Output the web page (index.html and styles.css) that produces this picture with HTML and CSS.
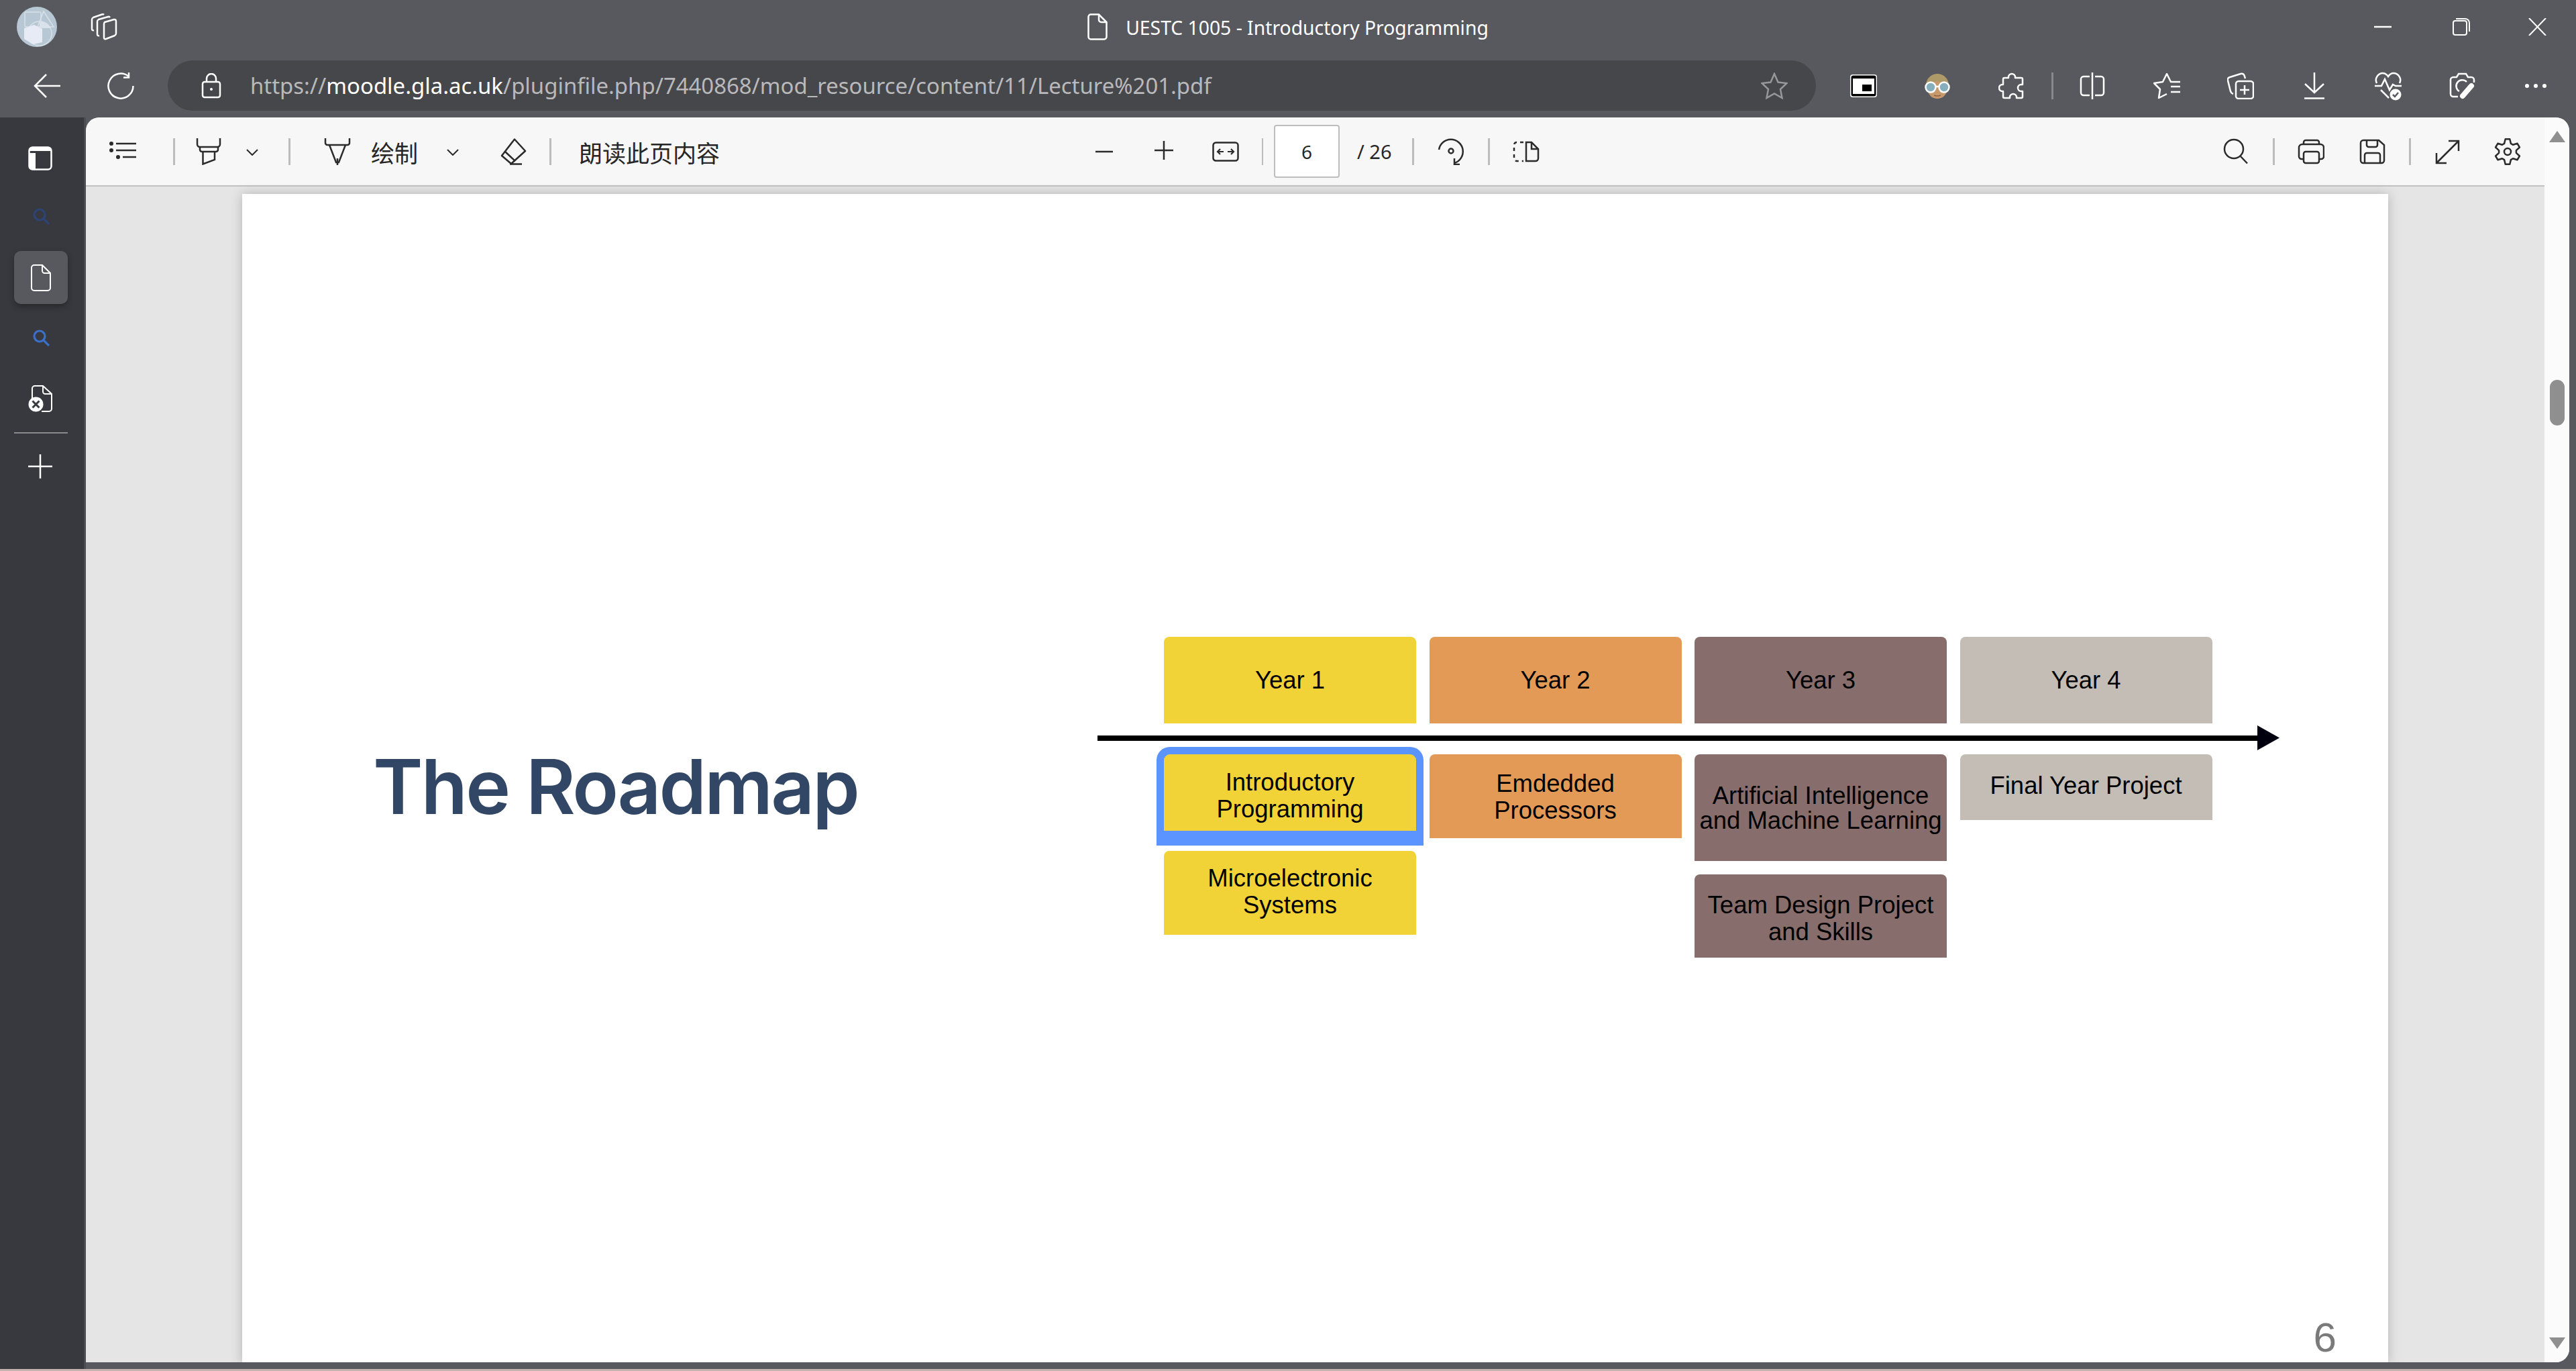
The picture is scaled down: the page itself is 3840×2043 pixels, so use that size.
FILE: index.html
```html
<!doctype html>
<html>
<head>
    <meta charset='utf-8'>
    <title>UESTC 1005 - Introductory Programming</title>
    <link rel="stylesheet" href="styles.css">
</head>
<body>
    <div class="titleBar">
        <div class="titleLeft">
            <svg class="avatar" width="60" height="60" viewBox="0 0 60 60">
                <circle cx="30" cy="30" r="30" fill="#b7c8d4"/>
                <g fill="none" stroke="#d7e0e8" stroke-width="1.5">
                    <rect x="12" y="8" width="24" height="22" rx="2"/>
                    <path d="M40 7L55 30H31z"/>
                    <circle cx="34" cy="40" r="18"/>
                </g>
                <path d="M11 32L26 27L38 33V53L24 56L11 48z" fill="#e6ebf5"/>
                <path d="M34 22a18 18 0 0 1 17 10H34z" fill="#d9e1ea"/>
            </svg>
            <svg class="workspaces ml-50" width="40" height="40" viewBox="0 0 40 40" fill="none" stroke="#fff" stroke-width="2.5">
                <path d="M21 13L35 9Q38 8.500 38 12V30Q38 32 36 33L23 38Q20 39 20 36V16Q20 14 21 13z"/>
                <path d="M13 33Q10 34 10 31V12Q10 10 12 9L26 5Q28 4.500 29 6"/>
                <path d="M5 25Q2 26 2 23V9Q2 7 4 6L17 1.500Q19 1 20 2"/>
            </svg>
        </div>
        <div class="titleCenter">
            <svg width="30" height="40" viewBox="0 0 30 40" fill="none" stroke="#fff" stroke-width="2.5">
                <path d="M5 1.500H17L28.500 13V35a3.500 3.500 0 0 1-3.500 3.500H5A3.500 3.500 0 0 1 1.500 35V5A3.500 3.500 0 0 1 5 1.500z"/>
                <path d="M17 1.500V9.500a3.500 3.500 0 0 0 3.500 3.500H28.500"/>
            </svg>
            <span class="pageTitle">UESTC 1005 - Introductory Programming</span>
        </div>
        <div class="windowButtons">
            <svg width="26" height="26" viewBox="0 0 26 26" stroke="#fff" stroke-width="2.500"><path d="M0 13H26"/></svg>
            <svg class="ml-91" width="26" height="26" viewBox="0 0 26 26" fill="none" stroke="#fff" stroke-width="2">
                <rect x="1" y="4" width="20" height="21" rx="3"/>
                <path d="M5 1H19a6 6 0 0 1 6 6V20"/>
            </svg>
            <svg class="ml-87" width="27" height="26" viewBox="0 0 27 26" stroke="#fff" stroke-width="2"><path d="M1 0L26 26M26 0L1 26"/></svg>
        </div>
    </div>

    <div class="addressRow">
        <svg width="40" height="40" viewBox="0 0 40 40" fill="none" stroke="#fff" stroke-width="2.500"><path d="M3 20H40M19 3L2 20L19 37"/></svg>
        <svg class="ml-70" width="40" height="40" viewBox="0 0 40 40" fill="none" stroke="#fff" stroke-width="2.500">
            <path d="M32 6A18.500 18.500 0 1 0 38.500 20"/>
            <path d="M32 0V7.500H24"/>
        </svg>
        <div class="addressBar">
            <svg class="lock" width="30" height="38" viewBox="0 0 30 38" fill="none" stroke="#fff" stroke-width="2.500">
                <rect x="2" y="13" width="26" height="23" rx="3"/>
                <path d="M8 13V8a7 7 0 0 1 14 0V13"/>
                <circle cx="15" cy="24" r="2" fill="#fff" stroke="none"/>
            </svg>
            <span class="url">https://<b>moodle.gla.ac.uk</b>/pluginfile.php/7440868/mod_resource/content/11/Lecture%201.pdf</span>
            <svg class="star" width="40" height="40" viewBox="0 0 40 40" fill="none" stroke="#98989b" stroke-width="2.500">
                <path d="M20 2L25.500 14.500L38.500 16L29 25L31.500 38L20 31.500L8.500 38L11 25L1.500 16L14.500 14.500z"/>
            </svg>
        </div>
        <div class="browserTools">
            <svg width="40" height="34" viewBox="0 0 40 34">
                <rect width="40" height="34" rx="4" fill="#fff"/>
                <rect x="1.500" y="1.500" width="37" height="31" rx="3" fill="#000"/>
                <rect x="4" y="6" width="32" height="23" fill="#fff"/>
                <rect x="18" y="15" width="14" height="10" fill="#000"/>
            </svg>
            <svg class="ml-70" width="40" height="40" viewBox="0 0 40 40">
                <circle cx="20" cy="19" r="17" fill="#ad9a68"/>
                <ellipse cx="20" cy="26" rx="14" ry="13" fill="#c6996c"/>
                <path d="M15 34Q20 36 25 34" stroke="#8f5f3c" stroke-width="1.500" fill="none"/>
                <g fill="#86aebd" stroke="#fff" stroke-width="2.500">
                    <circle cx="10" cy="22" r="7.500"/>
                    <circle cx="30" cy="22" r="7.500"/>
                    <path d="M17 21H23"/>
                </g>
            </svg>
            <svg class="ml-71" width="40" height="40" viewBox="0 0 40 40" fill="none" stroke="#fff" stroke-width="2.500" stroke-linejoin="round">
                <path d="M15 7a5 5 0 0 1 10 0V8h9a2 2 0 0 1 2 2v8h-2a5 5 0 0 0 0 10h2v8a2 2 0 0 1-2 2h-7v-1a5 5 0 0 0-10 0v1H9a2 2 0 0 1-2-2v-8H6a5 5 0 0 1 0-10h1v-8a2 2 0 0 1 2-2h6z"/>
            </svg>
            <span class="chromeSep ml-39"></span>
            <svg class="ml-38" width="40" height="40" viewBox="0 0 40 40" fill="none" stroke="#fff" stroke-width="2.500">
                <path d="M16 6H7a4 4 0 0 0-4 4V30a4 4 0 0 0 4 4H16M24 6H33a4 4 0 0 1 4 4V30a4 4 0 0 1-4 4H24M20 0V40"/>
            </svg>
            <svg class="ml-71" width="40" height="40" viewBox="0 0 40 40" fill="none" stroke="#fff" stroke-width="2.500" stroke-linejoin="round">
                <path d="M40 14H26L20 2L14 14L1 16L10 25L8 38L20 32"/>
                <path d="M26 21H40M26 29H40"/>
            </svg>
            <svg class="ml-70" width="40" height="40" viewBox="0 0 40 40" fill="none" stroke="#fff" stroke-width="2.500">
                <rect x="13" y="13" width="26" height="26" rx="4"/>
                <path d="M26 19V33M19 26H33"/>
                <path d="M9 32Q6 31 5 28L1 12Q0 8 4 7L20 2Q25 1 26 6L27 9"/>
            </svg>
            <svg class="ml-70" width="40" height="40" viewBox="0 0 40 40" fill="none" stroke="#fff" stroke-width="2.500">
                <path d="M20 0V30M6 17L20 30L34 17M5 38.500H35"/>
            </svg>
            <svg class="ml-70" width="40" height="44" viewBox="0 0 40 44" fill="none" stroke="#fff" stroke-width="2.500">
                <path d="M3 18C-1 10 6 3 12 3c4 0 6 2 8 5 2-3 4-5 8-5 6 0 13 7 9 15"/>
                <path d="M0 22H10L15 12L22 28L27 20L31 22H40"/>
                <path d="M9 28L21 40"/>
                <circle cx="31" cy="35" r="8.500" fill="#fff" stroke="none"/>
                <path d="M27 35L30 38L35 32" stroke="#58595e"/>
            </svg>
            <svg class="ml-70" width="40" height="40" viewBox="0 0 40 40" fill="none" stroke="#fff" stroke-width="2.500">
                <path d="M14 36H7a4 4 0 0 1-4-4V11a4 4 0 0 1 4-4H12L15 2H26L29 7H34a4 4 0 0 1 4 4V15"/>
                <path d="M27 14A9 9 0 1 0 16 28"/>
                <path d="M34 20L21 35" stroke-width="8" stroke-linecap="round"/>
            </svg>
            <svg class="ml-70" width="40" height="10" viewBox="0 0 40 10" fill="#fff">
                <circle cx="7" cy="5" r="3"/><circle cx="20" cy="5" r="3"/><circle cx="33" cy="5" r="3"/>
            </svg>
        </div>
    </div>

    <div class="mainRow">
        <div class="sidebar">
            <svg class="sideTabs" width="36" height="36" viewBox="0 0 36 36">
                <rect x="1.500" y="1.500" width="33" height="33" rx="5" fill="none" stroke="#fff" stroke-width="2.500"/>
                <path d="M6 1.500H30a4.500 4.500 0 0 1 4.500 4.500V7H1.500V6A4.500 4.500 0 0 1 6 1.500zM1.500 10H11V34.500H6a4.500 4.500 0 0 1-4.500-4.500z" fill="#fff"/>
            </svg>
            <svg class="sideSearch" width="25" height="26" viewBox="0 0 25 26" fill="none" stroke="#2c4475" stroke-width="3.200">
                <circle cx="10" cy="10" r="8"/><path d="M16 16L24 24"/>
            </svg>
            <div class="sideActive">
                <svg width="30" height="40" viewBox="0 0 30 40" fill="none" stroke="#fff" stroke-width="2">
                    <path d="M5 1H17L29 13V35a4 4 0 0 1-4 4H5a4 4 0 0 1-4-4V5a4 4 0 0 1 4-4z"/>
                    <path d="M17 1V9.500a3.500 3.500 0 0 0 3.500 3.500H29"/>
                </svg>
            </div>
            <svg class="sideSearch2" width="25" height="26" viewBox="0 0 25 26" fill="none" stroke="#3b70c9" stroke-width="3.200">
                <circle cx="10" cy="10" r="8"/><path d="M16 16L24 24"/>
            </svg>
            <svg class="sideClosed" width="36" height="40" viewBox="0 0 36 40" fill="none" stroke="#fff" stroke-width="2">
                <path d="M6 20V5a4 4 0 0 1 4-4H22L35 13V35a4 4 0 0 1-4 4H20"/>
                <path d="M22 1V9.500a3.500 3.500 0 0 0 3.500 3.500H35"/>
                <circle cx="11.500" cy="28.500" r="11" fill="#fff" stroke="none"/>
                <path d="M6.500 23.500L16.500 33.500M16.500 23.500L6.500 33.500" stroke="#38393e" stroke-width="3"/>
            </svg>
            <div class="sideRule"></div>
            <svg class="sidePlus" width="36" height="36" viewBox="0 0 36 36" stroke="#fff" stroke-width="2.500"><path d="M18 0V36M0 18H36"/></svg>
        </div>

        <div class="panel">
            <div class="viewerColumn">
                <div class="pdfToolbar">
                    <div class="toolGroup leftTools">
                        <svg class="tool" viewBox="0 0 40 40" fill="none" stroke="#2b2b2b" stroke-width="2.500">
                            <path d="M10 8H40M10 18H40M20 28H40"/>
                            <g fill="#2b2b2b" stroke="none"><circle cx="3" cy="8" r="3"/><circle cx="3" cy="18" r="3"/><circle cx="13" cy="28" r="3"/></g>
                        </svg>
                        <span class="sep ml-55"></span>
                        <svg class="tool ml-30" viewBox="0 0 40 40" fill="none" stroke="#2b2b2b" stroke-width="2.500">
                            <path d="M3 0V9a4 4 0 0 0 4 4H33a4 4 0 0 0 4-4V0"/>
                            <path d="M7 13V17a3 3 0 0 0 3 3H31a3 3 0 0 0 3-3V13"/>
                            <path d="M11.500 20V38.500L29 32V20"/>
                        </svg>
                        <svg class="chevron ml-36" width="18" height="10" viewBox="0 0 18 10" fill="none" stroke="#2b2b2b" stroke-width="2"><path d="M1 1L9 9L17 1"/></svg>
                        <span class="sep ml-45"></span>
                        <svg class="tool ml-50" viewBox="0 0 40 40" fill="none" stroke="#2b2b2b" stroke-width="2.500">
                            <path d="M2 0V7a3 3 0 0 0 3 3H35a3 3 0 0 0 3-3V0"/>
                            <path d="M8 10L18 36H22L32 10"/>
                            <path d="M20 30V40"/>
                        </svg>
                        <span class="toolText ml-30">绘制</span>
                        <svg class="chevron ml-43" width="18" height="10" viewBox="0 0 18 10" fill="none" stroke="#2b2b2b" stroke-width="2"><path d="M1 1L9 9L17 1"/></svg>
                        <svg class="tool ml-61" viewBox="0 0 40 40" fill="none" stroke="#2b2b2b" stroke-width="2.500" stroke-linejoin="round">
                            <path d="M22 1.500L38 19L17 38L3 26z"/>
                            <path d="M8 20L23 34M15 38.500H33"/>
                        </svg>
                        <span class="sep ml-34"></span>
                        <span class="toolText ml-41">朗读此页内容</span>
                    </div>
                    <div class="toolGroup">
                        <svg class="tool" viewBox="0 0 40 40" stroke="#2b2b2b" stroke-width="2.500"><path d="M7 20H33"/></svg>
                        <svg class="tool ml-49" viewBox="0 0 40 40" stroke="#2b2b2b" stroke-width="2.500"><path d="M6 18H34M20 4V32"/></svg>
                        <svg class="ml-52" width="40" height="30" viewBox="0 0 40 30" fill="none" stroke="#2b2b2b" stroke-width="2.500">
                            <rect x="1.500" y="1.500" width="37" height="27" rx="4"/>
                            <path d="M8 15H17M12 11L8 15L12 19M23 15H32M28 11L32 15L28 19" stroke-width="2.200"/>
                        </svg>
                        <span class="sep thin ml-34"></span>
                        <input class="pageBox ml-16" type="text" value="6">
                        <span class="pageCount ml-26">/ 26</span>
                        <span class="sep ml-30"></span>
                        <svg class="tool ml-35" viewBox="0 0 40 40" fill="none" stroke="#2b2b2b" stroke-width="2.500">
                            <path d="M2 17A18 18 0 1 1 25 37"/>
                            <path d="M25 30V39H33"/>
                            <circle cx="20" cy="19" r="3.500"/>
                        </svg>
                        <span class="sep ml-35"></span>
                        <svg class="tool ml-34" viewBox="0 0 40 40" fill="none" stroke="#2b2b2b" stroke-width="2.500">
                            <path d="M16 6H6a4 4 0 0 0-4 4V30a4 4 0 0 0 4 4H16" stroke-dasharray="5 5"/>
                            <path d="M20 6H28L38 16V30a4 4 0 0 1-4 4H20z"/>
                            <path d="M28 6V16H38"/>
                        </svg>
                    </div>
                    <div class="toolGroup rightTools">
                        <svg class="tool" viewBox="0 0 40 40" fill="none" stroke="#2b2b2b" stroke-width="2.500">
                            <circle cx="17" cy="16" r="14"/><path d="M27 27L37 37.500"/>
                        </svg>
                        <span class="sep ml-35"></span>
                        <svg class="tool ml-34" viewBox="0 0 40 40" fill="none" stroke="#2b2b2b" stroke-width="2.500">
                            <path d="M9 9V6a3 3 0 0 1 3-3H29a3 3 0 0 1 3 3V9"/>
                            <path d="M9 31H6a4 4 0 0 1-4-4V14a5 5 0 0 1 5-5H34a5 5 0 0 1 5 5V27a4 4 0 0 1-4 4H32"/>
                            <rect x="9" y="20" width="23" height="17" rx="3"/>
                        </svg>
                        <svg class="tool ml-51" viewBox="0 0 40 40" fill="none" stroke="#2b2b2b" stroke-width="2.500">
                            <path d="M8 3H30L38 10V33a4 4 0 0 1-4 4H7a4 4 0 0 1-4-4V7a4 4 0 0 1 4-4z"/>
                            <path d="M12 3V10a3 3 0 0 0 3 3H25a3 3 0 0 0 3-3V3"/>
                            <path d="M9 37V25a3 3 0 0 1 3-3H29a3 3 0 0 1 3 3V37"/>
                        </svg>
                        <span class="sep ml-35"></span>
                        <svg class="tool ml-34" viewBox="0 0 40 40" fill="none" stroke="#2b2b2b" stroke-width="2.500">
                            <path d="M4 37L37 4M22 4H37V19M4 22V37H19"/>
                        </svg>
                        <svg class="tool ml-50" viewBox="0 0 40 40" fill="none" stroke="#2b2b2b" stroke-width="2.500" stroke-linejoin="round">
                            <polygon points="16.700,1.300 23.300,1.300 24.900,7.900 28,9.800 34.600,7.800 37.900,13.500 32.900,18.200 32.900,21.800 37.900,26.500 34.600,32.200 28,30.200 24.900,32.100 23.300,38.700 16.700,38.700 15.100,32.100 12,30.200 5.400,32.200 2.100,26.500 7.100,21.800 7.100,18.200 2.100,13.500 5.400,7.800 12,9.800 15.100,7.900"/>
                            <circle cx="20" cy="20" r="5"/>
                        </svg>
                    </div>
                </div>

                <div class="viewer">
                    <div class="page">
                        <div class="slide">
                            <h1 class="slideTitle">The Roadmap</h1>
                            <div class="roadmap">
                                <div class="yearRow">
                                    <div class="card yellow yearCard">Year 1</div>
                                    <div class="card orange yearCard">Year 2</div>
                                    <div class="card brown yearCard">Year 3</div>
                                    <div class="card stone yearCard">Year 4</div>
                                </div>
                                <div class="timeline">
                                    <div class="timelineBar"></div>
                                    <div class="timelineHead"></div>
                                </div>
                                <div class="courseRow">
                                    <div class="courseCol gapWide">
                                        <div class="card yellow intro current">Introductory<br>Programming</div>
                                        <div class="card yellow micro">Microelectronic<br>Systems</div>
                                    </div>
                                    <div class="courseCol">
                                        <div class="card orange embedded">Emdedded<br>Processors</div>
                                    </div>
                                    <div class="courseCol">
                                        <div class="card brown ai">Artificial Intelligence<br>and Machine Learning</div>
                                        <div class="card brown team">Team Design Project<br>and Skills</div>
                                    </div>
                                    <div class="courseCol">
                                        <div class="card stone final">Final Year Project</div>
                                    </div>
                                </div>
                            </div>
                        </div>
                        <div class="slideNumber">6</div>
                    </div>
                </div>
            </div>
            <div class="scrollTrack">
                <div class="arrowUp"></div>
                <div class="scrollThumb"></div>
                <div class="arrowDown"></div>
            </div>
        </div>
    </div>
    <div class="wallpaperStrip"></div>
</body>
</html>
```

FILE: styles.css
```css
* {
    box-sizing: border-box;
}

html, body {
    margin: 0;
    height: 100%;
    overflow: hidden;
}

body {
    display: flex;
    flex-direction: column;
    background: #58595e;
    color: #fff;
    font-family: "Noto Sans", "Noto Sans CJK SC", sans-serif;
}

svg {
    display: block;
    flex: none;
}

/* spacing helpers for the toolbars */
.ml-16 { margin-left: 16px; }
.ml-26 { margin-left: 26px; }
.ml-30 { margin-left: 30px; }
.ml-34 { margin-left: 34px; }
.ml-35 { margin-left: 35px; }
.ml-36 { margin-left: 36px; }
.ml-38 { margin-left: 38px; }
.ml-39 { margin-left: 39px; }
.ml-41 { margin-left: 41px; }
.ml-43 { margin-left: 43px; }
.ml-45 { margin-left: 45px; }
.ml-49 { margin-left: 49px; }
.ml-50 { margin-left: 50px; }
.ml-51 { margin-left: 51px; }
.ml-52 { margin-left: 52px; }
.ml-55 { margin-left: 55px; }
.ml-61 { margin-left: 61px; }
.ml-70 { margin-left: 70px; }
.ml-71 { margin-left: 71px; }
.ml-87 { margin-left: 87px; }
.ml-91 { margin-left: 91px; }

/* window title row */
.titleBar {
    flex: none;
    height: 90px;
    padding-bottom: 10px;
    display: grid;
    grid-template-columns: 1fr auto 1fr;
    align-items: center;
}

.titleLeft {
    display: flex;
    align-items: center;
    padding-left: 25px;
}

.titleCenter {
    display: flex;
    align-items: center;
    gap: 27px;
}

.pageTitle {
    font-size: 28.300px;
    line-height: 40px;
    margin-top: 1px;
}

.windowButtons {
    display: flex;
    align-items: center;
    justify-content: flex-end;
    padding-right: 44px;
}

/* address row */
.addressRow {
    flex: none;
    height: 85px;
    padding: 0 40px 10px 50px;
    display: flex;
    align-items: center;
}

.addressBar {
    flex: 1;
    height: 75px;
    margin-left: 50px;
    padding: 0 42px 0 50px;
    display: flex;
    align-items: center;
    background: #46474b;
    border-radius: 38px;
}

.url {
    flex: 1;
    margin-left: 43px;
    font-size: 32.900px;
    color: #b9b9bb;
    white-space: nowrap;
}

.url b {
    font-weight: 400;
    color: #fff;
}

.browserTools {
    flex: none;
    margin-left: 51px;
    display: flex;
    align-items: center;
}

.chromeSep {
    width: 3px;
    height: 40px;
    background: #87888b;
}

/* sidebar */
.mainRow {
    flex: 1;
    min-height: 0;
    display: flex;
}

.sidebar {
    flex: none;
    width: 128px;
    display: flex;
    flex-direction: column;
    align-items: center;
    background: #38393e;
    border-right: 3px solid #4b4c50;
    padding-right: 3px;
}

.sideTabs {
    margin-top: 43px;
    margin-left: -3px;
}

.sideSearch {
    margin-top: 56px;
}

.sideActive {
    width: 80px;
    height: 79px;
    margin-top: 38px;
    display: flex;
    align-items: center;
    justify-content: center;
    background: #58595e;
    border-radius: 10px;
    box-shadow: 0 4px 10px rgba(0, 0, 0, 0.3);
}

.sideSearch2 {
    margin-top: 38px;
}

.sideClosed {
    margin-top: 57px;
    margin-left: -3px;
}

.sideRule {
    width: 80px;
    height: 2px;
    margin-top: 30px;
    background: #8b8b8d;
}

.sidePlus {
    margin-top: 31px;
    margin-left: -3px;
}

/* pdf panel */
.panel {
    flex: 1;
    min-width: 0;
    margin: 0 10px 10px 0;
    display: flex;
    overflow: hidden;
    border-radius: 20px;
    border-bottom-left-radius: 0;
    background: #e5e5e5;
}

.viewerColumn {
    flex: 1;
    min-width: 0;
    display: flex;
    flex-direction: column;
}

.pdfToolbar {
    flex: none;
    height: 103px;
    display: grid;
    grid-template-columns: 1498px 1fr auto;
    align-items: center;
    background: #f7f7f7;
    border-bottom: 2px solid #c2c2c2;
    color: #262626;
}

.toolGroup {
    display: flex;
    align-items: center;
}

.leftTools {
    padding-left: 35px;
}

.rightTools {
    padding-right: 35px;
}

.tool {
    width: 40px;
    height: 40px;
}

.sep {
    width: 3px;
    height: 40px;
    background: #bcbcbc;
}

.sep.thin {
    width: 2px;
}

.chevron {
    margin-top: 3px;
}

.toolText {
    font-family: "Noto Sans CJK SC", sans-serif;
    font-size: 35px;
    line-height: 40px;
    margin-top: 3px;
    white-space: nowrap;
}

.pageBox {
    width: 98px;
    height: 79px;
    padding: 0;
    border: 2px solid #bdbdbd;
    border-radius: 4px;
    background: #fff;
    color: #262626;
    font-family: "Noto Sans", sans-serif;
    font-size: 28px;
    text-align: center;
}

.pageCount {
    width: 52px;
    font-size: 29px;
    white-space: nowrap;
}

/* scrollbar */
.scrollTrack {
    flex: none;
    width: 37px;
    position: relative;
    background: #fbfbfb;
}

.arrowUp, .arrowDown {
    position: absolute;
    left: 7px;
    width: 24px;
    height: 17px;
    background: #8f8f8f;
}

.arrowUp {
    top: 20px;
    clip-path: polygon(50% 0, 100% 100%, 0 100%);
}

.arrowDown {
    bottom: 20px;
    clip-path: polygon(0 0, 100% 0, 50% 100%);
}

.scrollThumb {
    position: absolute;
    top: 391px;
    left: 8px;
    width: 22px;
    height: 68px;
    border-radius: 11px;
    background: #8f8f8f;
}

/* slide */
.viewer {
    flex: 1;
    min-height: 0;
    padding: 11px 0 0 233px;
    display: flex;
}

.page {
    width: 3199px;
    display: flex;
    flex-direction: column;
    background: #fff;
    box-shadow: 0 0 16px rgba(0, 0, 0, 0.22);
    color: #000;
    font-family: "Liberation Sans", Arial, sans-serif;
}

.slide {
    flex: 1;
    min-height: 0;
    padding: 660px 0 0 199px;
    display: flex;
    align-items: flex-start;
}

.slideTitle {
    flex: none;
    width: 1076px;
    margin: 167px 0 0;
    text-indent: -4px;
    font-family: Inter, sans-serif;
    font-size: 113px;
    font-weight: 600;
    line-height: 113px;
    letter-spacing: -2.800px;
    color: #324766;
}

.roadmap {
    flex: none;
    width: 1762px;
}

.yearRow, .courseRow {
    display: flex;
    gap: 19.500px;
    padding-left: 99px;
}

.card {
    width: 376px;
    display: flex;
    align-items: center;
    justify-content: center;
    text-align: center;
    font-size: 36.500px;
    line-height: 40px;
    border-radius: 8px 8px 0 0;
    white-space: nowrap;
}

.yellow { background: #f1d237; }
.orange { background: #e49a57; }
.brown { background: #876e6d; }
.stone { background: #c4bdb5; }

.yearCard { height: 129px; }
.intro { height: 114px; }
.micro { height: 125px; padding-bottom: 4px; }
.embedded { height: 125px; padding-top: 3px; }
.ai { height: 159px; line-height: 37px; }
.team { height: 124px; padding-top: 8px; }
.final { height: 98px; padding-bottom: 4px; }

.current {
    position: relative;
    padding-top: 10px;
}

.current::before {
    content: "";
    position: absolute;
    inset: -11px -11px -22px -11px;
    border: 11px solid #5b93ff;
    border-bottom-width: 22px;
    border-radius: 20px 20px 0 0;
}

.timeline {
    margin: 3px 0 6px;
    display: flex;
    align-items: center;
}

.timelineBar {
    width: 1729px;
    height: 8px;
    background: #000;
}

.timelineHead {
    width: 33px;
    height: 37px;
    background: #00000f;
    clip-path: polygon(0 0, 100% 50%, 0 100%);
}

.courseCol {
    display: flex;
    flex-direction: column;
    gap: 20px;
}

.courseCol.gapWide {
    gap: 30px;
}

.slideNumber {
    flex: none;
    padding: 0 77px 6px 0;
    text-align: right;
    font-size: 62px;
    line-height: 62px;
    color: #7a7a7a;
}

.wallpaperStrip {
    flex: none;
    height: 3px;
    background: #c5b3b0;
}
```
